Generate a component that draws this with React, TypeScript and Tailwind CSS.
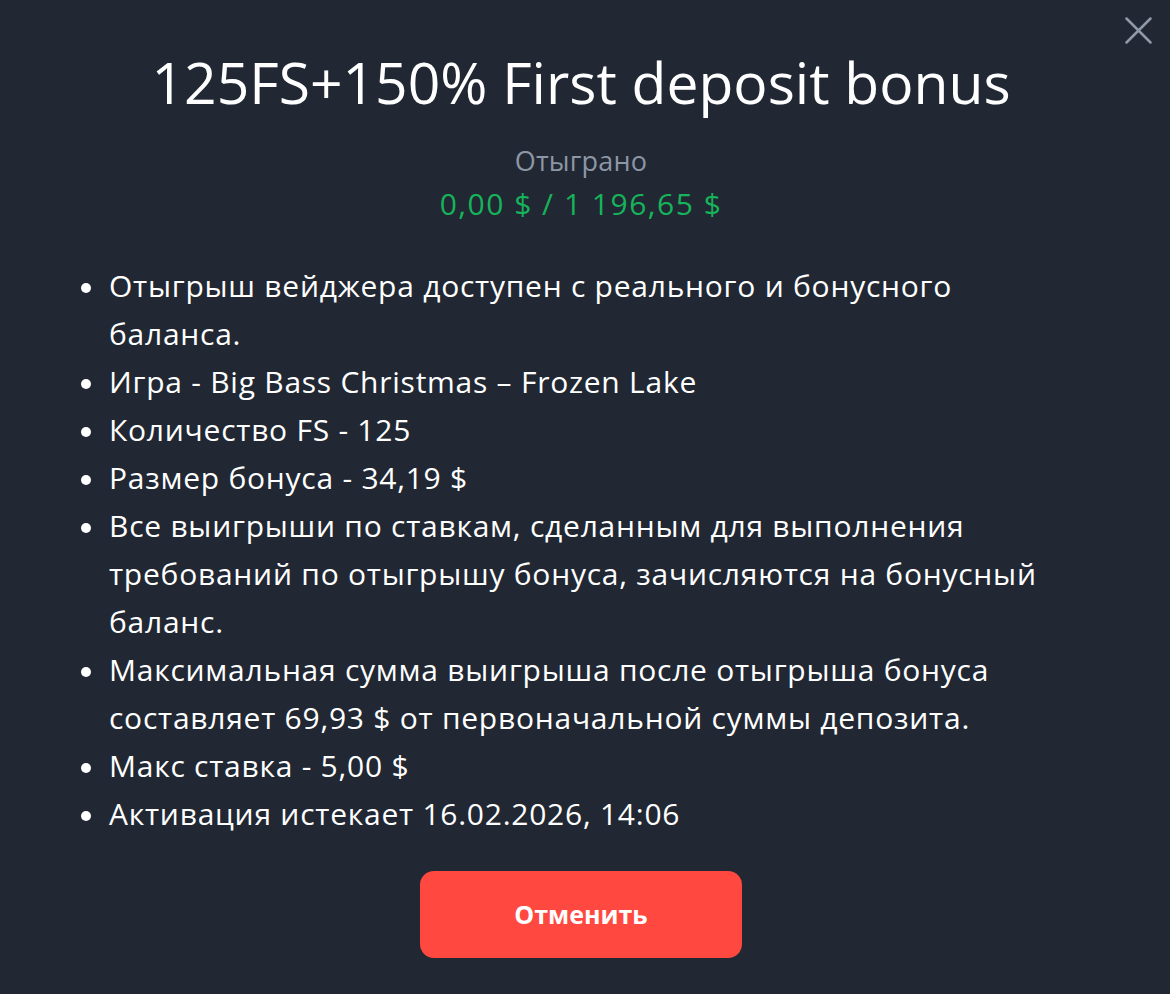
import React from "react";

const items: React.ReactNode[] = [
  <>Отыгрыш вейджера доступен с реального и бонусного<br />баланса.</>,
  <>Игра - Big Bass Christmas – Frozen Lake</>,
  <>Количество FS - 125</>,
  <>Размер бонуса - 34,19 $</>,
  <>Все выигрыши по ставкам, сделанным для выполнения<br />требований по отыгрышу бонуса, зачисляются на бонусный<br />баланс.</>,
  <>Максимальная сумма выигрыша после отыгрыша бонуса<br />составляет 69,93 $ от первоначальной суммы депозита.</>,
  <>Макс ставка - 5,00 $</>,
  <>Активация истекает 16.02.2026, 14:06</>,
];

export default function App() {
  return (
    <div
      className="w-[1170px] h-[994px] bg-[#212833] relative text-white"
      style={{ fontFamily: "'Open Sans', 'Noto Sans', sans-serif" }}
    >
      <button className="absolute right-[18px] top-[17px] w-[27px] h-[27px] text-[#8f99a8]">
        <svg viewBox="0 0 27 27" width="27" height="27" fill="none" stroke="currentColor" strokeWidth="2.5" strokeLinecap="round">
          <path d="M1.5 1.5L25.5 25.5M25.5 1.5L1.5 25.5" />
        </svg>
      </button>
      <div className="flex flex-col items-center pl-[72px] pr-[80px] pt-[46px]">
        <h1 className="text-[57px] leading-[72px] font-normal text-center whitespace-nowrap">125FS+150% First deposit bonus</h1>
        <div className="mt-[27px] text-[27px] leading-[32px] tracking-[0.2px] text-[#8d96a5]">Отыграно</div>
        <div className="mt-[7px] text-[30px] leading-[40px] tracking-[1.5px] text-[#17b35a]">0,00 $ / 1 196,65 $</div>
        <ul className="self-stretch mt-[38px] pl-[9px] text-[30px] leading-[48px] tracking-[0.75px]">
          {items.map((it, i) => (
            <li key={i} className="flex">
              <span className="w-[28px] shrink-0 flex justify-start pt-[21px]">
                <span className="block w-[10px] h-[10px] rounded-full bg-white" />
              </span>
              <span className="whitespace-nowrap">{it}</span>
            </li>
          ))}
        </ul>
        <button className="mt-[33px] w-[322px] h-[87px] rounded-[14px] bg-[#ff4840] text-white text-[25px] font-bold">
          Отменить
        </button>
      </div>
    </div>
  );
}
